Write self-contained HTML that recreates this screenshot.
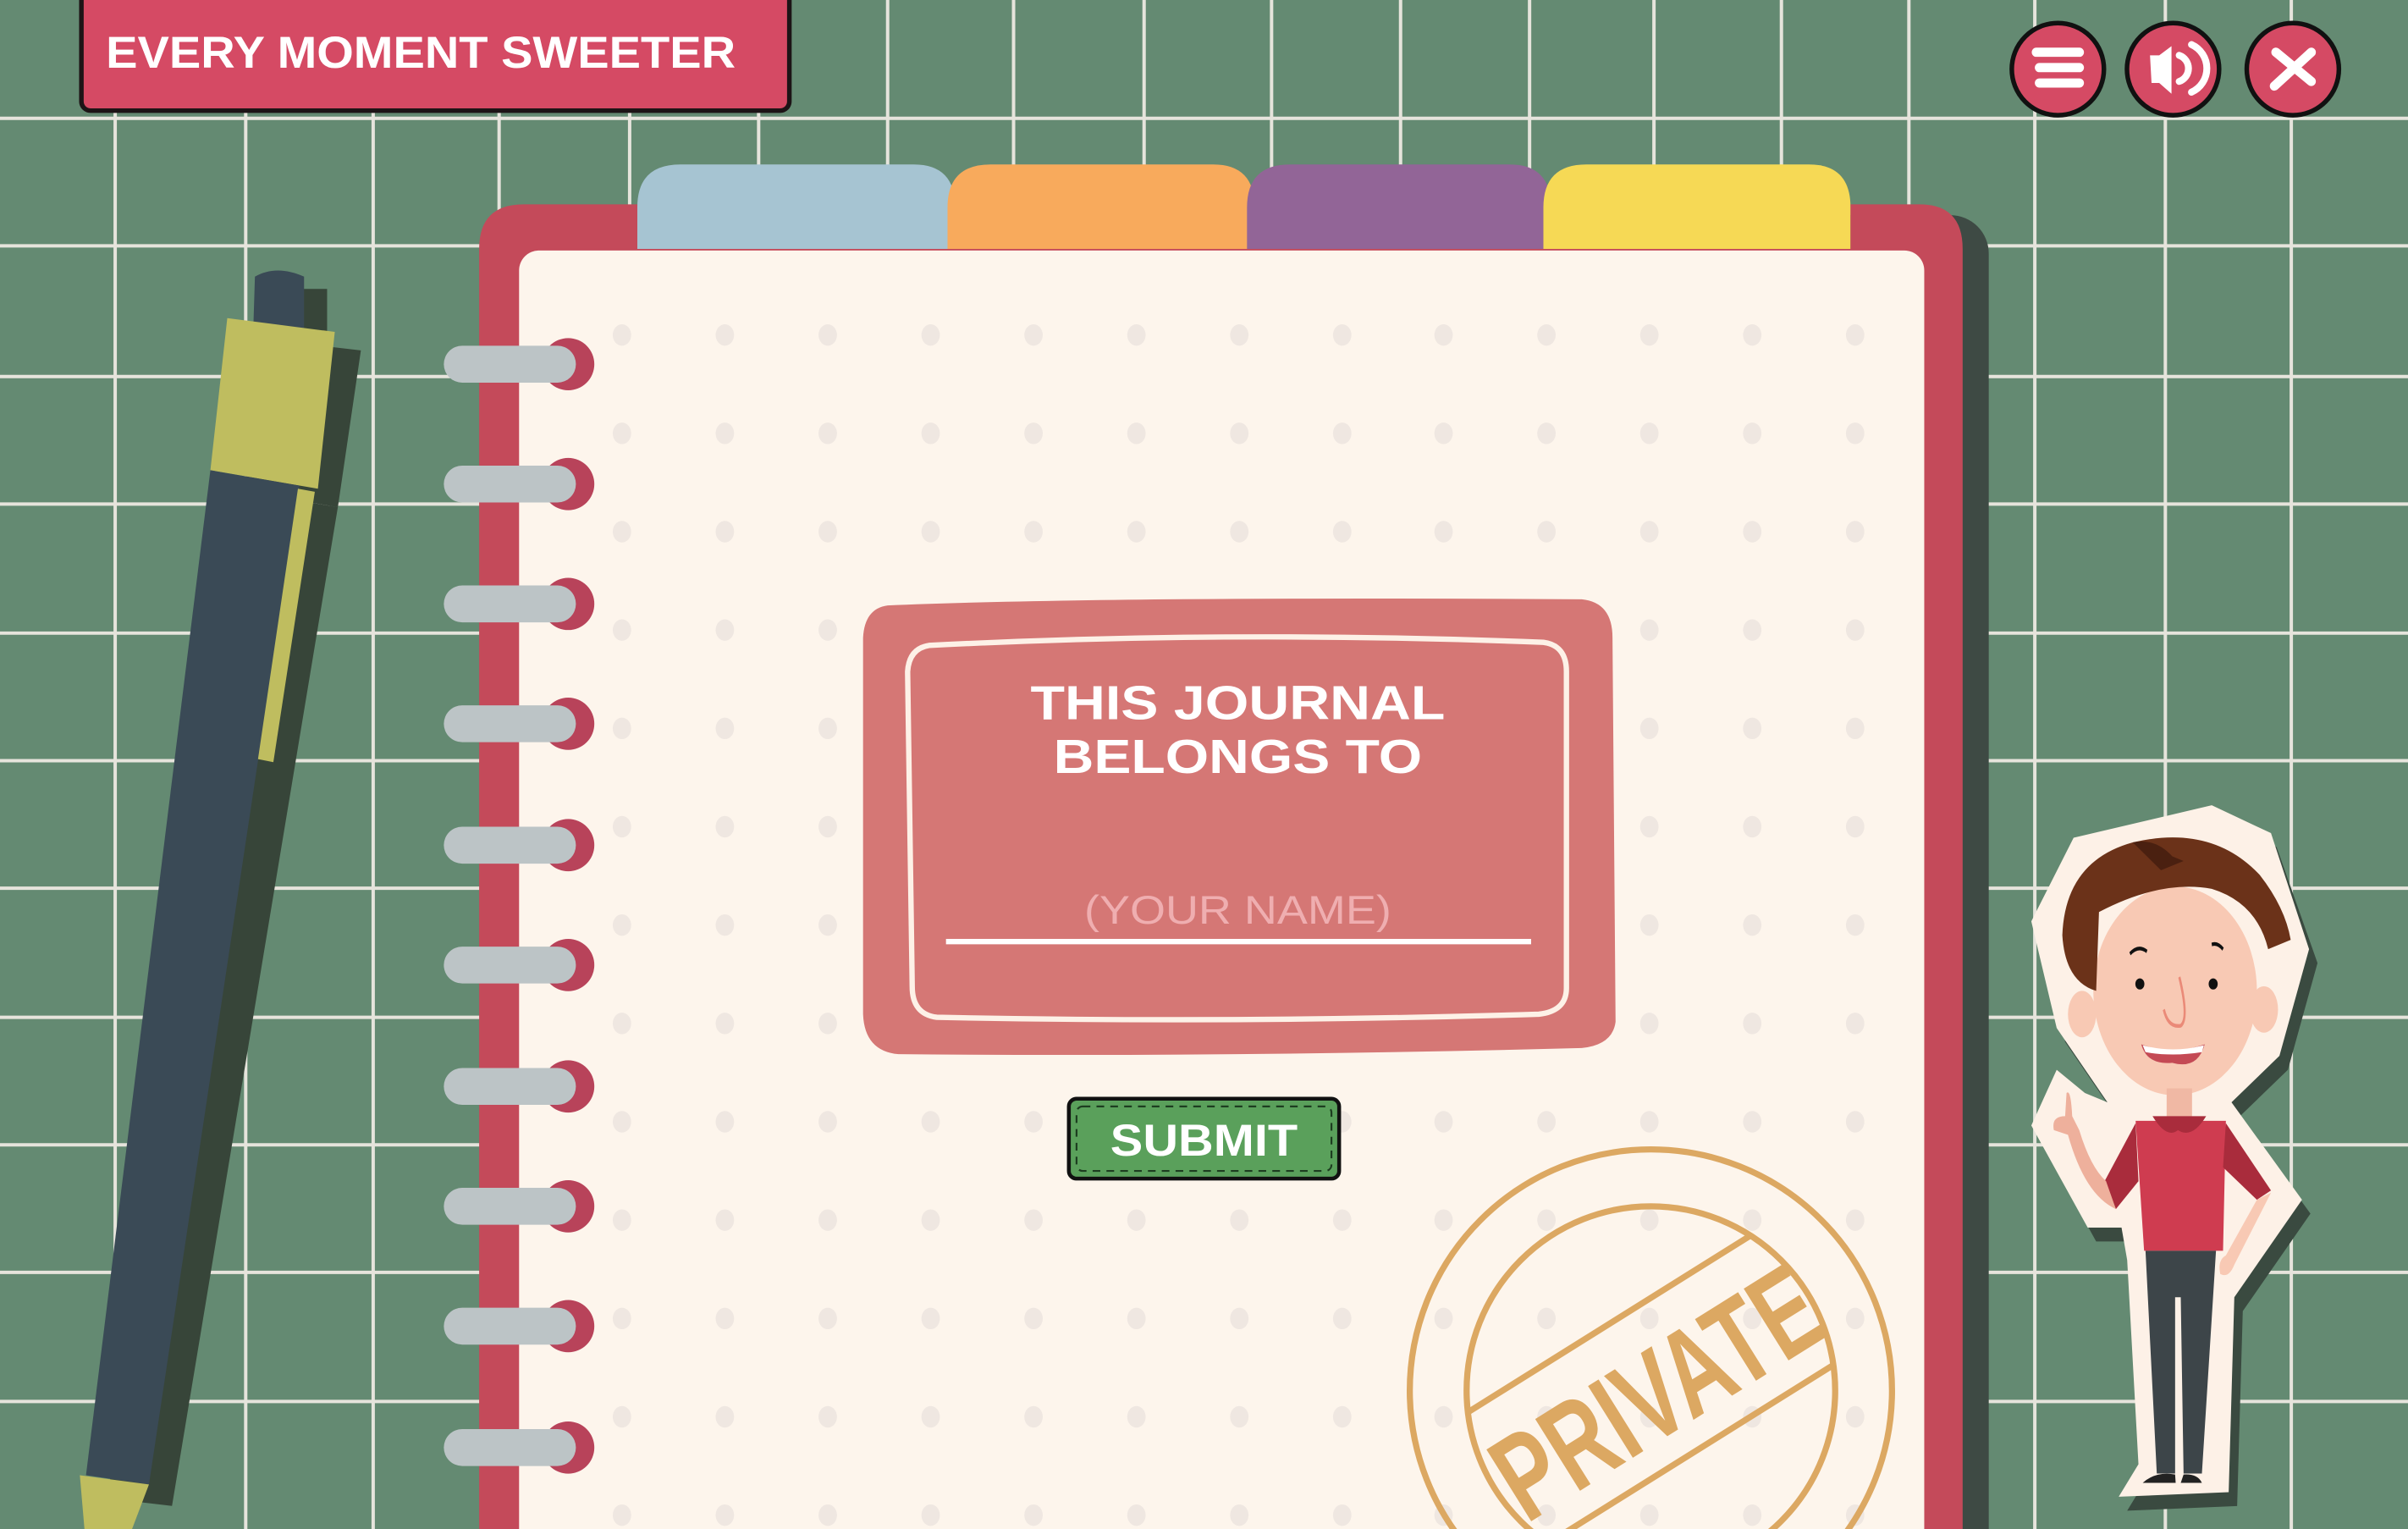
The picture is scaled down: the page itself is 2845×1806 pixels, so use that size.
<!DOCTYPE html>
<html><head><meta charset="utf-8"><style>
html,body{margin:0;padding:0;width:2845px;height:1806px;overflow:hidden;background:#648a72}
svg{display:block;overflow:hidden}
text{font-family:"Liberation Sans",sans-serif;font-weight:bold}
</style></head><body>
<svg width="2845" height="1806" viewBox="0 0 1568 995" preserveAspectRatio="none" xmlns="http://www.w3.org/2000/svg">
<defs><clipPath id="stc"><circle cx="1075" cy="905" r="120"/></clipPath><clipPath id="all"><rect width="1568" height="995"/></clipPath></defs>
<g clip-path="url(#all)">
<rect width="1568" height="995" fill="#648a72"/>
<g stroke="#e6e4dc" stroke-width="2.2" fill="none">
<path d="M75 0V995M160 0V995M243 0V995M325 0V995M410 0V995M494 0V995M578 0V995M660 0V995M745 0V995M828 0V995M912 0V995M996 0V995M1077 0V995M1160 0V995M1243 0V995M1325 0V995M1410 0V995M1492 0V995"/>
<path d="M0 77H1568M0 160H1568M0 245H1568M0 328H1568M0 412H1568M0 495H1568M0 578H1568M0 662H1568M0 745H1568M0 828H1568M0 912H1568"/>
</g>
<rect x="53" y="-6" width="461" height="78" rx="6" fill="#d54a64" stroke="#1d1416" stroke-width="3"/>
<text x="274" y="44" fill="#fff" font-size="29" text-anchor="middle" textLength="410" lengthAdjust="spacingAndGlyphs">EVERY MOMENT SWEETER</text>
<g stroke="#111" stroke-width="3" fill="#d54a64">
<circle cx="1340" cy="45" r="30"/><circle cx="1415" cy="45" r="30"/><circle cx="1493" cy="45" r="30"/>
</g>
<g stroke="#fff" stroke-width="6" stroke-linecap="round" fill="none">
<path d="M1326 34H1354M1328 44H1354M1328 54H1354"/>
<path d="M1482 34L1505 53M1505 34L1481 56"/>
<path d="M1419 36A9 9 0 0 1 1419 53M1427 29A17 17 0 0 1 1427 60" stroke-width="4.5"/>
</g>
<path d="M1400 36H1406L1414 30V61L1406 54H1401Z" fill="#fff"/>
<g fill="#374539">
<path d="M180 188H213V225H180Z"/>
<path d="M165 220L235 228L220 330L160 320Z"/>
<path d="M160 320L220 330L112 980L70 975Z"/>
</g>
<path d="M166 180Q180 172 198 180L198 215L165 212Z" fill="#3a4a56"/>
<path d="M148 207L218 216L207 318L137 306Z" fill="#bfbd5f"/>
<path d="M137 306L195 316L97 966L56 960Z" fill="#3a4a56"/>
<path d="M52 960L97 966L86 995H55Z" fill="#bfbd5f"/>
<path d="M194 318L205 320L178 496L168 494Z" fill="#bfbd5f"/>
<rect x="320" y="140" width="975" height="880" rx="25" fill="#3e4a44"/>
<path d="M415 170V135Q415 107 443 107H595Q622 107 622 135V170Z" fill="#a6c4d2"/>
<path d="M617 170V135Q617 107 645 107H790Q817 107 817 135V170Z" fill="#f8aa5c"/>
<path d="M812 170V135Q812 107 840 107H983Q1010 107 1010 135V170Z" fill="#926597"/>
<path d="M1005 170V135Q1005 107 1033 107H1178Q1205 107 1205 135V170Z" fill="#f6d955"/>
<path d="M312 1000V162Q312 133 341 133H415V162H1205V133H1250Q1278 133 1278 162V1000Z" fill="#c44a5a"/>
<rect x="338" y="163" width="915" height="850" rx="13" fill="#fdf5ec"/>
<g fill="#efe7e1">
<g id="row"><ellipse cx="405" cy="218" rx="6" ry="7"/><ellipse cx="472" cy="218" rx="6" ry="7"/><ellipse cx="539" cy="218" rx="6" ry="7"/><ellipse cx="606" cy="218" rx="6" ry="7"/><ellipse cx="673" cy="218" rx="6" ry="7"/><ellipse cx="740" cy="218" rx="6" ry="7"/><ellipse cx="807" cy="218" rx="6" ry="7"/><ellipse cx="874" cy="218" rx="6" ry="7"/><ellipse cx="940" cy="218" rx="6" ry="7"/><ellipse cx="1007" cy="218" rx="6" ry="7"/><ellipse cx="1074" cy="218" rx="6" ry="7"/><ellipse cx="1141" cy="218" rx="6" ry="7"/><ellipse cx="1208" cy="218" rx="6" ry="7"/></g>
<use href="#row" y="64"/><use href="#row" y="128"/><use href="#row" y="192"/><use href="#row" y="256"/><use href="#row" y="320"/><use href="#row" y="384"/><use href="#row" y="448"/><use href="#row" y="512"/><use href="#row" y="576"/><use href="#row" y="640"/><use href="#row" y="704"/><use href="#row" y="768"/>
</g>
<g id="ring">
<circle cx="370" cy="237" r="17" fill="#b8435a"/>
<rect x="289" y="225" width="86" height="24" rx="12" fill="#bcc4c6"/>
</g>
<use href="#ring" y="78"/><use href="#ring" y="156"/><use href="#ring" y="234"/><use href="#ring" y="313"/><use href="#ring" y="391"/><use href="#ring" y="470"/><use href="#ring" y="548"/><use href="#ring" y="626"/><use href="#ring" y="705"/>
<path d="M578 394Q720 388 1030 390Q1050 392 1050 415L1052 665Q1050 680 1030 682Q800 688 585 686Q563 684 562 660L562 415Q563 396 578 394Z" fill="#d57775"/>
<path d="M605 420Q800 410 1005 418Q1020 420 1020 437L1020 643Q1020 658 1002 660Q800 666 610 662Q594 660 594 642L591 437Q592 422 605 420Z" fill="none" stroke="#fdf1e7" stroke-width="3.5"/>
<text x="806" y="468" fill="#fff" font-size="31" text-anchor="middle" textLength="270" lengthAdjust="spacingAndGlyphs">THIS JOURNAL</text>
<text x="806" y="503" fill="#fff" font-size="31" text-anchor="middle" textLength="240" lengthAdjust="spacingAndGlyphs">BELONGS TO</text>
<text x="806" y="601" fill="#efaeb0" font-size="26" text-anchor="middle" textLength="200" lengthAdjust="spacingAndGlyphs" style="font-weight:normal">(YOUR NAME)</text>
<rect x="616" y="611" width="381" height="3.5" fill="#fff"/>
<rect x="696" y="715" width="176" height="52" rx="5" fill="#5aa05b" stroke="#111" stroke-width="2.5"/>
<rect x="701" y="720" width="166" height="42" rx="4" fill="none" stroke="#1d3d20" stroke-width="1.2" stroke-dasharray="5 4"/>
<text x="784" y="752" fill="#fff" font-size="29" text-anchor="middle" textLength="122" lengthAdjust="spacingAndGlyphs">SUBMIT</text>
<g fill="none" stroke="#dca862">
<circle cx="1075" cy="905" r="157" stroke-width="4"/>
<circle cx="1075" cy="905" r="120" stroke-width="4"/>
</g>
<g clip-path="url(#stc)"><path d="M900 853H1250M900 953H1250" fill="none" stroke="#dca862" stroke-width="4" transform="rotate(-32 1075 900)"/></g>
<text x="1075" y="935" fill="#dca862" font-size="80" text-anchor="middle" transform="rotate(-32 1075 900)" textLength="235" lengthAdjust="spacingAndGlyphs">PRIVATE</text>
<g transform="translate(1311.7 518) scale(0.1836 0.302)">
<path d="M100 290L240 110L720 45L930 110L1075 360L970 590L800 690L1050 900L810 1110L790 1530L400 1540L470 1470L430 1030L410 960L290 960L90 740L180 620L280 670L360 690L180 530Z" fill="#3a4a40"/>
<path d="M60 270L210 90L700 20L910 80L1045 330L940 560L770 660L1020 870L780 1080L760 1500L370 1510L440 1440L400 1000L380 930L260 930L60 710L150 590L250 640L330 660L150 500Z" fill="#fdf1e7"/>
<ellipse cx="570" cy="420" rx="290" ry="225" fill="#f8c9b4"/>
<path d="M170 300Q180 140 420 100Q700 60 870 170Q960 240 980 310L900 330Q860 230 700 200Q520 180 300 250L290 420Q180 400 170 300Z" fill="#6b3219"/>
<path d="M420 100Q500 90 560 130L600 140L520 160Z" fill="#4a2010"/>
<circle cx="240" cy="470" r="50" fill="#f8c9b4"/><circle cx="885" cy="460" r="50" fill="#f8c9b4"/>
<ellipse cx="445" cy="405" rx="16" ry="12" fill="#111"/><ellipse cx="705" cy="405" rx="16" ry="12" fill="#111"/>
<path d="M410 340Q440 320 470 335M700 320Q720 315 740 330" stroke="#111" stroke-width="8" fill="none"/>
<path d="M585 390Q620 480 590 495Q545 500 530 460" stroke="#ea8a78" stroke-width="8" fill="none"/>
<path d="M450 535Q560 560 675 535Q650 590 560 575Q470 580 450 535Z" fill="#c44a55"/>
<path d="M455 537Q560 555 672 537L665 552Q560 562 465 552Z" fill="#fff"/>
<rect x="540" y="630" width="90" height="80" fill="#f0b8a4"/>
<path d="M430 700L750 700L740 980L460 980Z" fill="#cf3c50"/>
<path d="M490 690Q540 740 580 720Q630 740 680 690Z" fill="#a92c3c"/>
<path d="M430 705L320 830L360 890L440 830Z" fill="#a92c3c"/>
<path d="M750 705L910 850L860 870L740 800Z" fill="#a92c3c"/>
<path d="M325 830L360 890Q250 860 190 730L140 720Q130 690 180 690L185 640Q200 630 205 690L230 720Q270 800 325 830Z" fill="#eeb09c"/>
<path d="M860 870L910 855L780 1010Q760 1040 730 1030Q720 1000 750 990Z" fill="#f8c9b4"/>
<path d="M465 980L715 980L665 1460L600 1460L590 1080L570 1080L570 1460L505 1460Z" fill="#3d4549"/>
<path d="M455 1480Q500 1455 570 1462L572 1480Z M590 1480L600 1462Q650 1460 665 1480Z" fill="#222"/>
</g>
</g>
</svg>
</body></html>
